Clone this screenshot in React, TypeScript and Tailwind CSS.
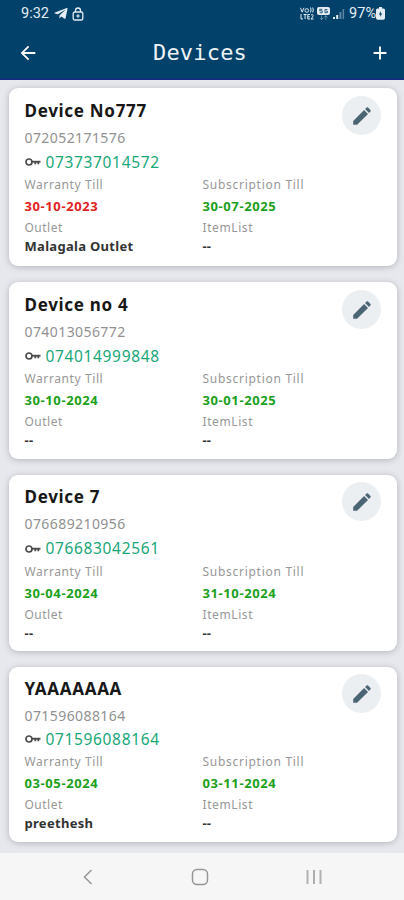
import clsx from "clsx";
import { FaTelegramPlane } from "react-icons/fa";
import { MdAdd, MdArrowBack } from "react-icons/md";

type Device = {
  name: string;
  serial: string;
  licence: string;
  warranty: string;
  expired?: boolean;
  subscription: string;
  outlet: string;
  itemList: string;
  className: string;
  licenceClassName: string;
};

const devices: Device[] = [
  {
    name: "Device No777",
    serial: "072052171576",
    licence: "073737014572",
    warranty: "30-10-2023",
    expired: true,
    subscription: "30-07-2025",
    outlet: "Malagala Outlet",
    itemList: "--",
    className: "h-[178px] pt-[10px]",
    licenceClassName: "leading-[20px]",
  },
  {
    name: "Device no 4",
    serial: "074013056772",
    licence: "074014999848",
    warranty: "30-10-2024",
    subscription: "30-01-2025",
    outlet: "--",
    itemList: "--",
    className: "h-[177px] pt-[10px]",
    licenceClassName: "leading-[20px]",
  },
  {
    name: "Device 7",
    serial: "076689210956",
    licence: "076683042561",
    warranty: "30-04-2024",
    subscription: "31-10-2024",
    outlet: "--",
    itemList: "--",
    className: "h-[176px] pt-[9px]",
    licenceClassName: "leading-[21px]",
  },
  {
    name: "YAAAAAAA",
    serial: "071596088164",
    licence: "071596088164",
    warranty: "03-05-2024",
    subscription: "03-11-2024",
    outlet: "preethesh",
    itemList: "--",
    className: "h-[175px] pt-[9px]",
    licenceClassName: "-mt-[1px] leading-[20px]",
  },
];

const StatusBar = () => {
  return (
    <div className="flex h-[27px] items-center justify-between pl-[21px] pr-[19px] text-[#e3edf3]">
      <div className="flex items-center">
        <span className="w-[33px] font-['Roboto',sans-serif] text-[14.5px] leading-[26px]">
          9:32
        </span>
        <FaTelegramPlane className="h-[15px] w-[14px]" />
        <svg className="ml-[4px] h-[14px] w-[12px]" viewBox="0 0 12 14" fill="none">
          <path d="M3.5 5V3.5a2.5 2.5 0 0 1 5 0V5" stroke="currentColor" strokeWidth="1.3" />
          <rect x="1.2" y="5" width="9.6" height="8" rx="1.6" stroke="currentColor" strokeWidth="1.3" />
          <path d="M6 7.2v3.6M4.2 9h3.6" stroke="currentColor" strokeWidth="1.2" />
        </svg>
      </div>
      <div className="flex items-center">
        <svg className="h-[13px] w-[14px]" viewBox="0 0 14 13" fill="none" stroke="currentColor">
          <path d="m.5.8 1.7 4.4L4 .8M10.5.5q1.2 2.4 0 5M12.7.5q1.2 2.4 0 5" />
          <circle cx="6.8" cy="3.5" r="1.8" />
          <path d="M1 7v5h2M3.5 7.5h3.2M5.1 7.5V12M10 7.5H7.8V12H10M7.8 9.8h2M11 8q2.3-1.2 2.2.6 0 1-2.2 3.4h2.6" />
        </svg>
        <svg className="ml-[3px] h-[14px] w-[13px]" viewBox="0 0 13 14">
          <rect width="13" height="8" rx="2" fill="currentColor" />
          <path d="M5.3 2.3H2.7v1.5h2.5v2H2.7M10.3 2.5H8v3.2h2.3V4H9.2" fill="none" stroke="#02416a" strokeWidth=".8" />
          <path d="M4.5 8.5v4M2.8 10.8l1.7 1.9 1.7-1.9M8.8 13V9M7.1 10.5l1.7-1.9 1.7 1.9" fill="none" stroke="currentColor" strokeOpacity=".4" />
        </svg>
        <svg className="ml-[3px] h-[12px] w-[12px]" viewBox="0 0 12 12" fill="currentColor">
          <path d="M0 9h2v2H0zM3.2 7h2v4h-2z" />
          <path d="M6.4 4h2v7h-2zM9.6 1h1.5v10H9.6z" opacity=".4" />
        </svg>
        <span className="ml-[4px] font-['Roboto',sans-serif] text-[14.5px] leading-[26px]">97%</span>
        <svg className="h-[13px] w-[9px]" viewBox="0 0 9 13">
          <path d="M3 0h3v1.5h1.5A1.5 1.5 0 0 1 9 3v8a1.8 1.8 0 0 1-1.8 1.8H1.8A1.8 1.8 0 0 1 0 11V3a1.5 1.5 0 0 1 1.5-1.5H3z" fill="currentColor" />
          <path d="M5 4 2.8 7.4h1.5L4 10l2.3-3.4H4.8z" fill="#02416a" />
        </svg>
      </div>
    </div>
  );
};

const Header = () => {
  return (
    <header className="h-[80px] shrink-0 border-b-2 border-[#112d7c] bg-[#02416a] text-white">
      <StatusBar />
      <div className="flex h-[52px] items-center justify-between pl-[17px] pr-[13px]">
        <MdArrowBack className="h-[22px] w-[22px]" />
        <h1 className="-ml-2 font-['DejaVu_Sans_Mono',monospace] text-[22px] leading-[52px] tracking-[0.2px] text-[#edf3f6]">
          Devices
        </h1>
        <MdAdd className="h-[22px] w-[22px]" />
      </div>
    </header>
  );
};

const KeyIcon = () => {
  return (
    <svg className="h-[10px] w-[16px]" viewBox="0 0 16 10" fill="none" stroke="#4a4a4a">
      <circle cx="4" cy="5" r="3" strokeWidth="1.7" />
      <path d="M7 4.7h8.5" strokeWidth="1.8" />
      <path d="M10.3 5v2.2M13.3 5v2.2" strokeWidth="1.8" />
    </svg>
  );
};

const PencilIcon = () => {
  return (
    <svg className="h-[20px] w-[20px]" viewBox="0 0 20 20" fill="#4c6575">
      <path d="M1.2 18.8v-3.9L12.1 4l3.9 3.9L5.1 18.8z" />
      <path d="m13.1 3 1.4-1.4q.8-.8 1.6 0l2.3 2.3q.8.8 0 1.6L17 6.9z" />
    </svg>
  );
};

const DeviceCard = ({ device }: { device: Device }) => {
  return (
    <div
      className={clsx(
        "flex shrink-0 items-start justify-between rounded-[9px] bg-white pl-[15.5px] pr-4 shadow-[0_1px_6px_rgba(40,45,60,0.28)]",
        device.className
      )}
    >
      <div className="flex-1">
        <h2 className="text-[17px] font-bold leading-[26px] tracking-[0.7px] text-[#171717]">
          {device.name}
        </h2>
        <p className="text-[14px] leading-[28px] tracking-[0.42px] text-[#919191]">
          {device.serial}
        </p>
        <div className={clsx("flex items-center gap-[5px]", device.licenceClassName)}>
          <KeyIcon />
          <span className="text-[15.5px] tracking-[0.65px] text-[#18a777]">{device.licence}</span>
        </div>
        <div className="-mr-9 grid grid-cols-[178px_1fr]">
          <p className="text-[12px] leading-[25px] tracking-[0.6px] text-[#979797]">Warranty Till</p>
          <p className="text-[12px] leading-[25px] tracking-[0.72px] text-[#979797]">Subscription Till</p>
          <p
            className={clsx(
              "text-[13px] font-bold leading-[18px] tracking-[0.6px]",
              device.expired ? "text-[#e12222]" : "text-[#1c9f20]"
            )}
          >
            {device.warranty}
          </p>
          <p className="text-[13px] font-bold leading-[18px] tracking-[0.6px] text-[#1c9f20]">
            {device.subscription}
          </p>
          <p className="text-[12px] leading-[25px] tracking-[0.5px] text-[#979797]">Outlet</p>
          <p className="text-[12px] leading-[25px] tracking-[0.6px] text-[#979797]">ItemList</p>
          <p className="text-[13px] font-bold leading-[13px] tracking-[0.3px] text-[#333]">
            {device.outlet}
          </p>
          <p className="text-[13px] font-bold leading-[13px] text-[#333]">{device.itemList}</p>
        </div>
      </div>
      <button className="-mt-[2px] flex h-[39px] w-[39px] items-center justify-center rounded-full bg-[#ebeff2]">
        <PencilIcon />
      </button>
    </div>
  );
};

const NavBar = () => {
  return (
    <nav className="flex h-[47px] shrink-0 items-center justify-between bg-[#f6f6f6] pl-[81px] pr-[81px] pt-[1px] text-[#969696]">
      <svg className="h-[18px] w-[14px]" viewBox="0 0 14 18" fill="none">
        <path d="M10.5 2 3.5 9l7 7" stroke="currentColor" strokeWidth="1.5" />
      </svg>
      <svg className="h-[18px] w-[18px]" viewBox="0 0 18 18" fill="none">
        <rect x="1.5" y="1.5" width="15" height="15" rx="4.5" stroke="currentColor" strokeWidth="1.5" />
      </svg>
      <svg className="h-[18px] w-[18px]" viewBox="0 0 18 18" fill="none" stroke="currentColor">
        <path d="M9 2v14" strokeWidth="1.5" />
        <path d="M2.5 2v14M15.5 2v14" strokeWidth="2" strokeOpacity=".7" />
      </svg>
    </nav>
  );
};

const App = () => {
  return (
    <div className="flex h-[900px] w-full flex-col overflow-hidden bg-[#e7e8ed] font-['Noto_Sans',sans-serif]">
      <Header />
      <main className="flex flex-1 flex-col gap-4 overflow-hidden pl-[9px] pr-[7px] pt-2">
        {devices.map((device) => (
          <DeviceCard key={device.name} device={device} />
        ))}
      </main>
      <NavBar />
    </div>
  );
};

export default App;
